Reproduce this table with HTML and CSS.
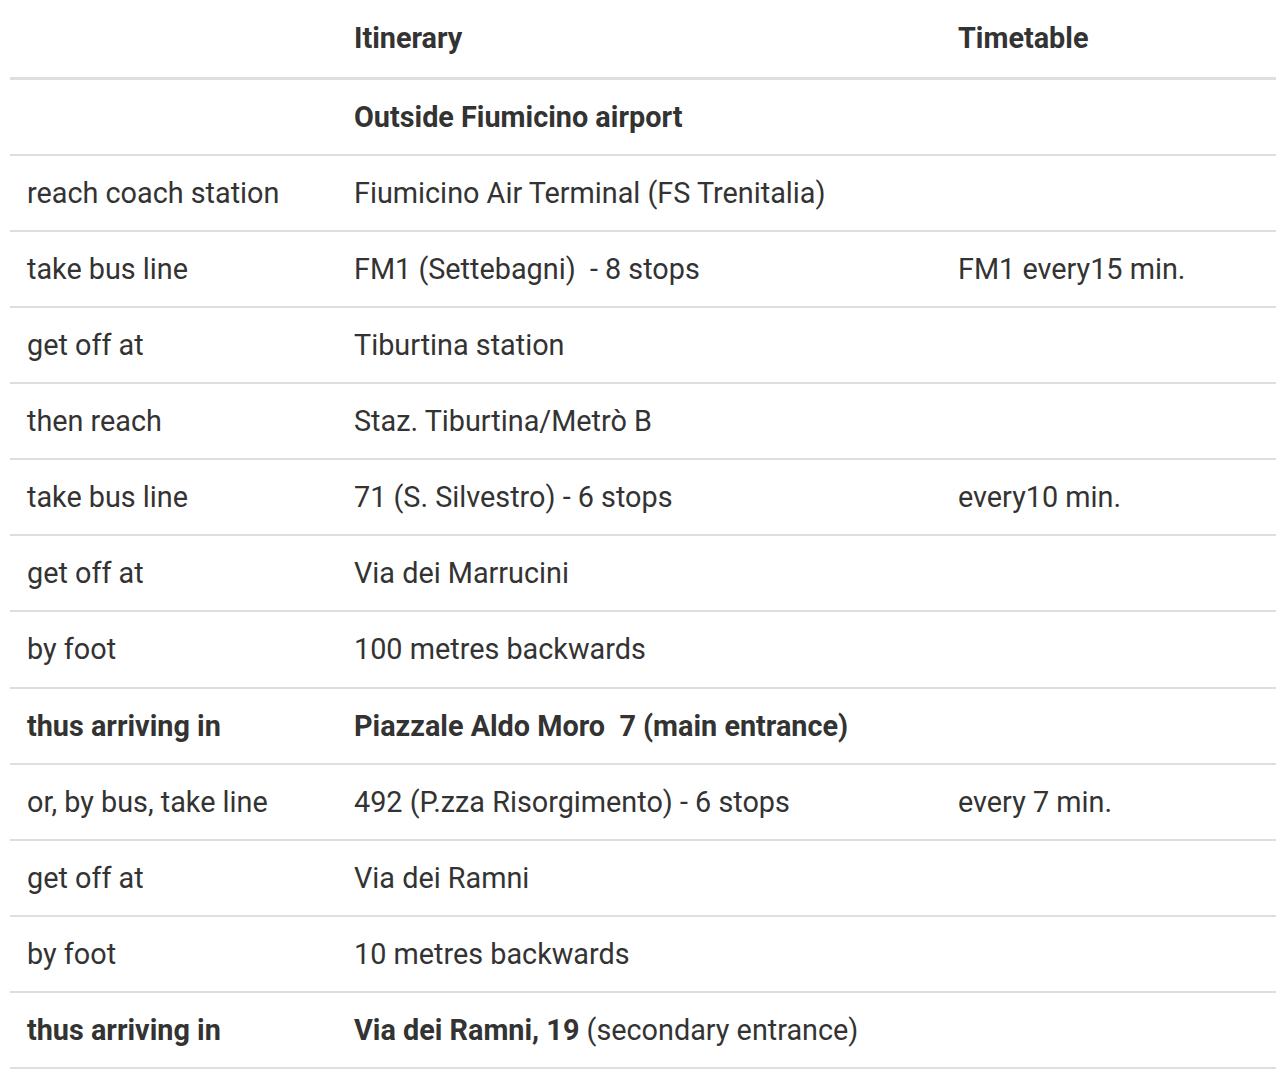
FILE: index.html
```html
<!DOCTYPE html>
<html lang="en">
<head>
<meta charset="utf-8">
<title>Itinerary</title>
<link rel="stylesheet" href="styles.css">
</head>
<body>
<div class="wrap">
<table class="route">
<colgroup>
<col class="c1"><col class="c2"><col class="c3">
</colgroup>
<thead>
<tr><th></th><th>Itinerary</th><th>Timetable</th></tr>
</thead>
<tbody>
<tr><td></td><td><strong>Outside Fiumicino airport</strong></td><td></td></tr>
<tr><td>reach coach station</td><td>Fiumicino Air Terminal (FS Trenitalia)</td><td></td></tr>
<tr><td>take bus line</td><td>FM1 (Settebagni)&nbsp; - 8 stops</td><td>FM1 every15 min.</td></tr>
<tr><td>get off at</td><td>Tiburtina station</td><td></td></tr>
<tr><td>then reach</td><td>Staz. Tiburtina/Metrò B</td><td></td></tr>
<tr><td>take bus line</td><td>71 (S. Silvestro) - 6 stops</td><td>every10 min.</td></tr>
<tr><td>get off at</td><td>Via dei Marrucini</td><td></td></tr>
<tr><td>by foot</td><td>100 metres backwards</td><td></td></tr>
<tr><td><strong>thus arriving in</strong></td><td><strong>Piazzale Aldo Moro&nbsp; 7 (main entrance)</strong></td><td></td></tr>
<tr><td>or, by bus, take line</td><td>492 (P.zza Risorgimento) - 6 stops</td><td>every 7 min.</td></tr>
<tr><td>get off at</td><td>Via dei Ramni</td><td></td></tr>
<tr><td>by foot</td><td>10 metres backwards</td><td></td></tr>
<tr><td><strong>thus arriving in</strong></td><td><strong>Via dei Ramni, 19</strong> (secondary entrance)</td><td></td></tr>
</tbody>
</table>
</div>
</body>
</html>
```
FILE: styles.css
```css
html, body {
  margin: 0;
  padding: 0;
  background: #fff;
}
.wrap {
  padding: 0 10px;
}
.route {
  width: 1266px;
  border-collapse: separate;
  border-spacing: 0;
  table-layout: fixed;
  font-family: Roboto, "Liberation Sans", sans-serif;
  font-size: 28.8px;
  color: #333;
}
.c1 { width: 327px; }
.c2 { width: 604px; }
.c3 { width: 335px; }
.route th,
.route td {
  text-align: left;
  vertical-align: middle;
  line-height: 34px;
  padding: 20px 17px 20.15px;
  border-bottom: 2px solid #dedede;
  white-space: nowrap;
}
.route th {
  font-weight: 700;
  padding: 21px 17px 21.5px;
  border-bottom: 3px solid #dedede;
}
.route strong {
  font-weight: 700;
}
```
